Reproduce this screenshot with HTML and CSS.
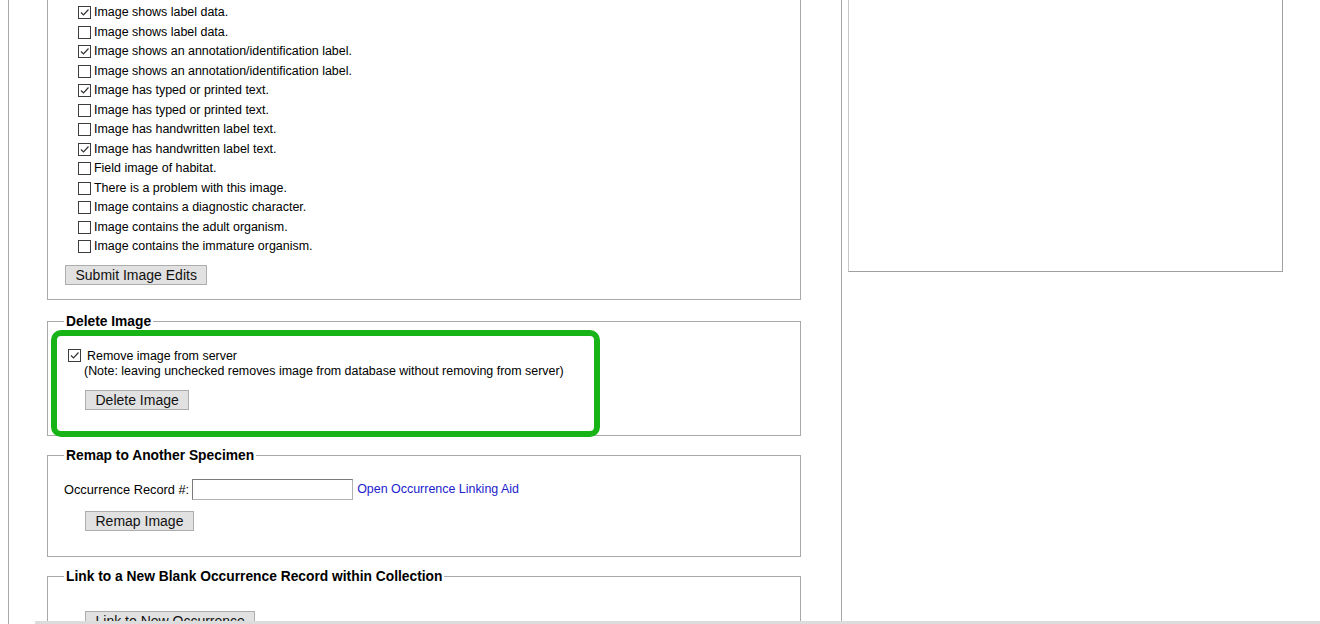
FILE: index.html
```html
<!DOCTYPE html>
<html>
<head>
<meta charset="utf-8">
<link rel="stylesheet" href="styles.css">
</head>
<body>
<div class="page">
  <div class="main">
    <fieldset class="fs fs-top">
      <div class="cb-row"><span class="cb on"><svg viewBox="0 0 11 11"><path d="M2 5.5 L4.5 8 L9.5 2.5"/></svg></span>Image shows label data.</div>
      <div class="cb-row"><span class="cb"></span>Image shows label data.</div>
      <div class="cb-row"><span class="cb on"><svg viewBox="0 0 11 11"><path d="M2 5.5 L4.5 8 L9.5 2.5"/></svg></span>Image shows an annotation/identification label.</div>
      <div class="cb-row"><span class="cb"></span>Image shows an annotation/identification label.</div>
      <div class="cb-row"><span class="cb on"><svg viewBox="0 0 11 11"><path d="M2 5.5 L4.5 8 L9.5 2.5"/></svg></span>Image has typed or printed text.</div>
      <div class="cb-row"><span class="cb"></span>Image has typed or printed text.</div>
      <div class="cb-row"><span class="cb"></span>Image has handwritten label text.</div>
      <div class="cb-row"><span class="cb on"><svg viewBox="0 0 11 11"><path d="M2 5.5 L4.5 8 L9.5 2.5"/></svg></span>Image has handwritten label text.</div>
      <div class="cb-row"><span class="cb"></span>Field image of habitat.</div>
      <div class="cb-row"><span class="cb"></span>There is a problem with this image.</div>
      <div class="cb-row"><span class="cb"></span>Image contains a diagnostic character.</div>
      <div class="cb-row"><span class="cb"></span>Image contains the adult organism.</div>
      <div class="cb-row"><span class="cb"></span>Image contains the immature organism.</div>
      <button class="btn btn-submit">Submit Image Edits</button>
    </fieldset>

    <fieldset class="fs fs-del">
      <legend>Delete Image</legend>
      <div class="hl-wrap">
        <div class="del-row"><span class="cb on"><svg viewBox="0 0 11 11"><path d="M2 5.5 L4.5 8 L9.5 2.5"/></svg></span><span class="del-label">Remove image from server</span></div>
        <div class="note">(Note: leaving unchecked removes image from database without removing from server)</div>
        <button class="btn btn-del">Delete Image</button>
        <div class="highlight"></div>
      </div>
    </fieldset>

    <fieldset class="fs fs-remap">
      <legend>Remap to Another Specimen</legend>
      <div class="remap-row">
        <span class="remap-label">Occurrence Record #:</span>
        <span class="text-input"></span>
        <a class="link" href="#">Open Occurrence Linking Aid</a>
      </div>
      <button class="btn btn-remap">Remap Image</button>
    </fieldset>

    <fieldset class="fs fs-link">
      <legend>Link to a New Blank Occurrence Record within Collection</legend>
      <button class="btn btn-link">Link to New Occurrence</button>
    </fieldset>
  </div>
  <div class="side">
    <div class="frame"></div>
  </div>
</div>
<div class="bottom-band"></div>
</body>
</html>
```

FILE: styles.css
```css
html, body {
  margin: 0;
  padding: 0;
  background: #ffffff;
  overflow: hidden;
}

body {
  font-family: "Liberation Sans", Arial, sans-serif;
  font-size: 12.45px;
  color: #000;
}

.page {
  display: flex;
  height: 624px;
  overflow: hidden;
}

.main {
  margin-left: 8px;
  width: 794px;
  padding-left: 38px;
  border-left: 1px solid #a8a8a8;
  border-right: 1px solid #a8a8a8;
  height: 700px;
}

.side {
  padding-left: 6px;
}

.frame {
  width: 435px;
  height: 272px;
  box-sizing: border-box;
  border: 1px solid #a0a0a0;
  border-top: none;
  border-left-color: #c8c8c8;
}

.fs {
  margin: 0;
  width: 754px;
  box-sizing: border-box;
  border: 1px solid #a9a9a9;
  padding: 0 16px;
  min-width: 0;
}

.fs legend {
  font-weight: bold;
  font-size: 13.8px;
  line-height: 16px;
  padding: 0 2px;
}

.fs-top {
  border-top: none;
  padding-top: 3px;
  padding-bottom: 14px;
}

.cb-row {
  display: flex;
  align-items: center;
  height: 19.5px;
  padding-left: 14px;
  line-height: 15px;
}

.cb {
  display: inline-flex;
  width: 13px;
  height: 13px;
  box-sizing: border-box;
  border: 1px solid #3c3c3c;
  background: #fff;
  margin-right: 3px;
  flex: none;
}

.cb svg {
  width: 11px;
  height: 11px;
  fill: none;
  stroke: #333;
  stroke-width: 1.2;
}

.btn {
  display: block;
  height: 20px;
  box-sizing: border-box;
  padding: 0 9.5px;
  font-family: "Liberation Sans", Arial, sans-serif;
  font-size: 14px;
  line-height: 18px;
  color: #111;
  background: #e1e1e1;
  border: 1px solid #adadad;
  border-radius: 0;
}

.btn-submit {
  margin-top: 8px;
  margin-left: 1px;
}

.fs-del {
  margin-top: 14px;
  padding-bottom: 25px;
}

.hl-wrap {
  position: relative;
  padding-top: 18px;
}

.del-row {
  display: flex;
  align-items: center;
  height: 16px;
  padding-left: 4px;
}

.del-row .cb {
  margin-right: 6px;
}

.note {
  padding-left: 20px;
  line-height: 15px;
}

.btn-del {
  margin-top: 11px;
  margin-left: 21px;
}

.highlight {
  position: absolute;
  left: -13px;
  top: 0;
  width: 549px;
  height: 107px;
  box-sizing: border-box;
  border: 6px solid #17b317;
  border-radius: 10px;
  pointer-events: none;
}

.fs-remap {
  margin-top: 12px;
  padding-bottom: 25px;
}

.remap-row {
  display: flex;
  align-items: center;
  margin-top: 15px;
  height: 21px;
}

.remap-label {
  font-size: 12.8px;
  margin-right: 3px;
}

.text-input {
  display: inline-block;
  width: 161px;
  height: 21px;
  box-sizing: border-box;
  border: 1px solid #7a7a7a;
  border-right-color: #b0b0b0;
  border-bottom-color: #b0b0b0;
  background: #fff;
  margin-right: 4px;
}

.link {
  color: #2222cc;
  text-decoration: none;
}

.btn-remap {
  margin-top: 11px;
  margin-left: 21px;
}

.fs-link {
  margin-top: 12px;
  padding-bottom: 30px;
}

.btn-link {
  margin-top: 26px;
  margin-left: 21px;
}

.bottom-band {
  position: fixed;
  left: 35px;
  right: 0;
  bottom: 0;
  height: 3px;
  background: #dcdcdc;
}
```
